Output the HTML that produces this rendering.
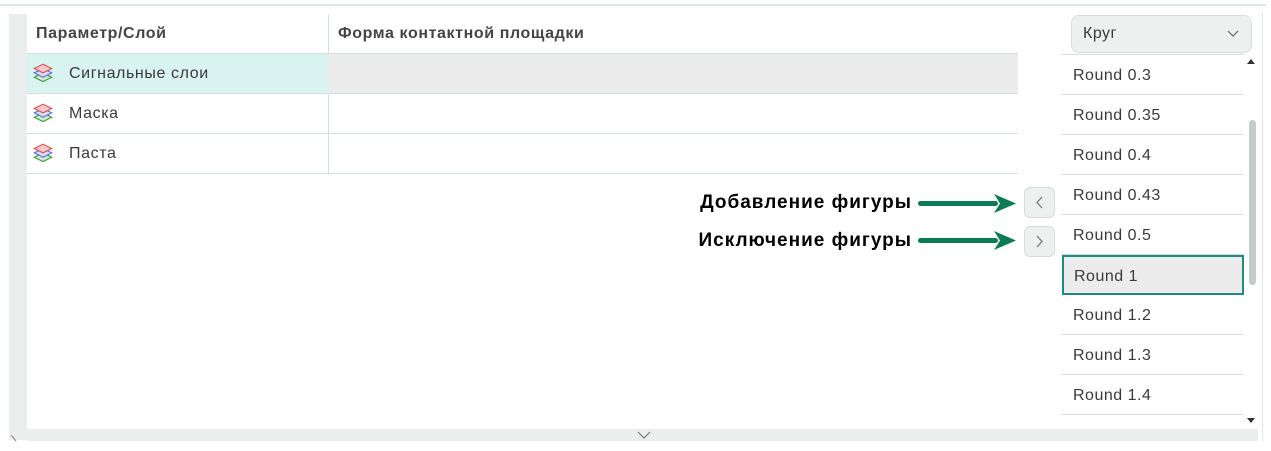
<!DOCTYPE html>
<html><head><meta charset="utf-8"><style>
*{box-sizing:border-box;margin:0;padding:0}
body{width:1271px;height:451px;background:#fff;position:relative;overflow:hidden;font-family:"Liberation Sans",sans-serif;color:#333}
.a{position:absolute}
.row{position:absolute;left:27px;width:991px;height:40px;border-bottom:1px solid #d4e0df}
.row span{position:absolute;left:42px;top:11px;font-size:16px;letter-spacing:0.6px;color:#3a3a3a}
.row svg{position:absolute;left:5px;top:8px}
.li{position:absolute;left:1062px;width:182px;height:40px;border-bottom:1px solid #d7dddc;font-size:16px;letter-spacing:0.5px;color:#3a3a3a;padding:12px 0 0 11px}
.lbl{position:absolute;right:359px;font-weight:bold;font-size:19px;letter-spacing:1px;color:#000}
.btn{position:absolute;left:1024px;width:31px;height:31px;border:1px solid #d8dddc;border-radius:6px;background:#eeefef}
.h{position:absolute;top:25px;font-size:16px;font-weight:bold;color:#444;letter-spacing:0.6px}
</style></head><body>
<div class="a" style="left:0;top:4px;width:1266px;height:2px;background:#dfe6e5"></div>
<div class="a" style="left:1262px;top:12px;width:1px;height:430px;background:#dfe6e5"></div>
<div class="a" style="left:9px;top:14px;width:18px;height:426px;background:#eceeed"></div>
<div class="a" style="left:27px;top:14px;width:991px;height:40px;border-bottom:1px solid #d4e0df"></div>
<div class="h" style="left:36px">Параметр/Слой</div>
<div class="h" style="left:338px">Форма контактной площадки</div>
<div class="a" style="left:328px;top:14px;width:1px;height:160px;background:#d4e0df"></div>
<div class="row" style="top:54px;background:linear-gradient(90deg,#d9f3f1 0 301px,#ececec 301px)"><svg width="22" height="24" viewBox="0 0 20 22"><path d="M2 14l8-4 8 4-8 4z" fill="#cfeacf" stroke="#3a9a3a"/><path d="M2 10l8-4 8 4-8 4z" fill="#d8defa" stroke="#5a6ee0"/><path d="M2 6l8-4 8 4-8 4z" fill="#f5c9c9" stroke="#d05050"/></svg><span>Сигнальные слои</span></div>
<div class="row" style="top:94px"><svg width="22" height="24" viewBox="0 0 20 22"><path d="M2 14l8-4 8 4-8 4z" fill="#cfeacf" stroke="#3a9a3a"/><path d="M2 10l8-4 8 4-8 4z" fill="#d8defa" stroke="#5a6ee0"/><path d="M2 6l8-4 8 4-8 4z" fill="#f5c9c9" stroke="#d05050"/></svg><span>Маска</span></div>
<div class="row" style="top:134px"><svg width="22" height="24" viewBox="0 0 20 22"><path d="M2 14l8-4 8 4-8 4z" fill="#cfeacf" stroke="#3a9a3a"/><path d="M2 10l8-4 8 4-8 4z" fill="#d8defa" stroke="#5a6ee0"/><path d="M2 6l8-4 8 4-8 4z" fill="#f5c9c9" stroke="#d05050"/></svg><span>Паста</span></div>

<div class="lbl" style="top:192px">Добавление фигуры</div>
<div class="lbl" style="top:230px">Исключение фигуры</div>
<svg class="a" style="left:916px;top:192px" width="102" height="60"><g fill="#0b7a55"><rect x="2" y="9" width="80" height="5" rx="2.5"/><path d="M78 2l22 9.5-22 9.5 6-9.5z"/><rect x="2" y="46" width="80" height="5" rx="2.5"/><path d="M78 39l22 9.5-22 9.5 6-9.5z"/></g></svg>
<div class="btn" style="top:187px"><svg width="29" height="29"><path d="M17 9l-5 5.5 5 5.5" stroke="#777" fill="none" stroke-width="1.3"/></svg></div>
<div class="btn" style="top:226px"><svg width="29" height="29"><path d="M12 9l5 5.5-5 5.5" stroke="#777" fill="none" stroke-width="1.3"/></svg></div>

<div class="a" style="left:1071px;top:15px;width:181px;height:38px;border:1px solid #d8dddc;border-radius:8px;background:#eeefef;font-size:16px;letter-spacing:0.5px;padding:9px 0 0 11px;color:#3a3a3a">Круг<svg class="a" style="left:155px;top:14px" width="12" height="8"><path d="M1 1l5 5 5-5" stroke="#666" fill="none" stroke-width="1.2"/></svg></div>
<div class="a" style="left:1062px;top:54px;width:182px;height:1px;background:#d7dddc"></div>
<div class="li" style="top:55px">Round 0.3</div>
<div class="li" style="top:95px">Round 0.35</div>
<div class="li" style="top:135px">Round 0.4</div>
<div class="li" style="top:175px">Round 0.43</div>
<div class="li" style="top:215px">Round 0.5</div>
<div class="li" style="top:255px;border:2px solid #1f8b80;background:#ececec;padding-left:10px;padding-top:11px">Round 1</div>
<div class="li" style="top:295px">Round 1.2</div>
<div class="li" style="top:335px">Round 1.3</div>
<div class="li" style="top:375px">Round 1.4</div>
<svg class="a" style="left:1246px;top:58px" width="10" height="8"><path d="M1 6h8L5 1z" fill="#333"/></svg>
<svg class="a" style="left:1246px;top:417px" width="10" height="8"><path d="M1 1h8L5 6z" fill="#333"/></svg>
<div class="a" style="left:1249px;top:120px;width:7px;height:165px;border-radius:4px;background:#c3cccb"></div>
<div class="a" style="left:27px;top:429px;width:1231px;height:12px;background:#eceeed"></div>
<svg class="a" style="left:637px;top:431px" width="14" height="8"><path d="M1 1l6 6 6-6" stroke="#777" fill="none" stroke-width="1.2"/></svg>
<svg class="a" style="left:10px;top:434px" width="8" height="8"><path d="M1 1l5 6" stroke="#888" fill="none"/></svg>
</body></html>
